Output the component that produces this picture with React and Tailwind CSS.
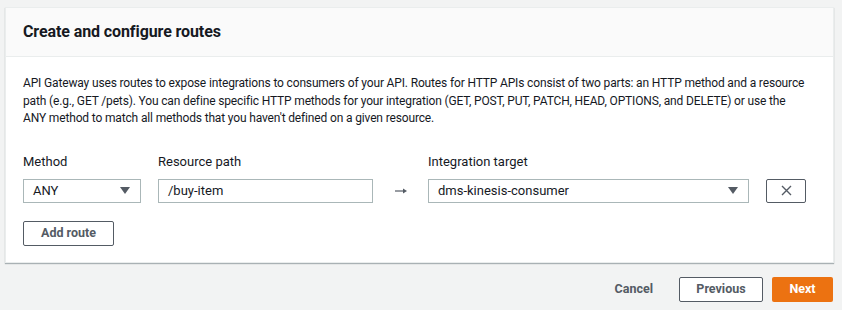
import React from 'react'

const Caret = () => (
  <svg width="10" height="7" viewBox="0 0 10 7" className="shrink-0">
    <path d="M0 0h10L5 7z" fill="#545b64" />
  </svg>
)

export default function App() {
  return (
    <div className="h-[310px] bg-[#f2f3f3] pt-[7px] pl-[5px] pr-[8px] font-['Roboto',sans-serif] text-[#16191f]">
      <div className="bg-white border border-[#eaeded] shadow-[0_1px_1px_0_rgba(0,28,36,0.3)]">
        {/* Header */}
        <div className="h-[49px] bg-[#fafafa] border-b border-[#eaeded] flex items-center px-[17px]">
          <h2 className="text-[16px] font-bold tracking-[-0.1px]">Create and configure routes</h2>
        </div>

        <div className="px-[17px] pt-[18px] pb-[16px]">
          <p className="text-[12px] leading-[17.5px] tracking-[-0.15px] pr-[10px]">
            API Gateway uses routes to expose integrations to consumers of your API. Routes for HTTP APIs consist of two parts: an HTTP method and a resource
            path (e.g., GET /pets). You can define specific HTTP methods for your integration (GET, POST, PUT, PATCH, HEAD, OPTIONS, and DELETE) or use the
            ANY method to match all methods that you haven't defined on a given resource.
          </p>

          {/* Route row */}
          <div className="flex items-end mt-[26px]">
            <div className="w-[118px] mr-[17px]">
              <div className="text-[13px] leading-[16px] mb-[9px]">Method</div>
              <div className="h-[24px] border border-[#aab7b8] flex items-center justify-between pl-[9px] pr-[10px] text-[13px]">
                <span>ANY</span>
                <Caret />
              </div>
            </div>
            <div className="w-[215px]">
              <div className="text-[13px] leading-[16px] mb-[9px]">Resource path</div>
              <div className="h-[24px] border border-[#aab7b8] flex items-center px-[9px] text-[13px]">/buy-item</div>
            </div>
            <div className="w-[55px] h-[24px] flex items-center justify-center">
              <svg width="12" height="6" viewBox="0 0 12 6">
                <path d="M0 3h9" stroke="#545b64" strokeWidth="1.2" />
                <path d="M8 0.6L12 3L8 5.4z" fill="#545b64" />
              </svg>
            </div>
            <div className="w-[321px] mr-[17px]">
              <div className="text-[13px] leading-[16px] mb-[9px]">Integration target</div>
              <div className="h-[24px] border border-[#aab7b8] flex items-center justify-between pl-[9px] pr-[10px] text-[13px]">
                <span>dms-kinesis-consumer</span>
                <Caret />
              </div>
            </div>
            <button className="w-[40px] h-[24px] border border-[#545b64] rounded-[2px] flex items-center justify-center">
              <svg width="11" height="11" viewBox="0 0 11 11">
                <path d="M1 1l9 9M10 1l-9 9" stroke="#545b64" strokeWidth="1.4" />
              </svg>
            </button>
          </div>

          <button className="mt-[18px] w-[91px] h-[25px] border border-[#545b64] rounded-[2px] text-[12.5px] font-bold text-[#545b64]">
            Add route
          </button>
        </div>
      </div>

      {/* Footer */}
      <div className="flex items-center justify-end mt-[14px] pr-[1px]">
        <button className="text-[12.5px] font-bold text-[#545b64] mr-[26px]">Cancel</button>
        <button className="w-[84px] h-[25px] bg-white border border-[#545b64] rounded-[2px] text-[12.5px] font-bold text-[#545b64] mr-[9px]">
          Previous
        </button>
        <button className="w-[61px] h-[25px] bg-[#ec7211] rounded-[2px] text-[12.5px] font-bold text-white">
          Next
        </button>
      </div>
    </div>
  )
}
